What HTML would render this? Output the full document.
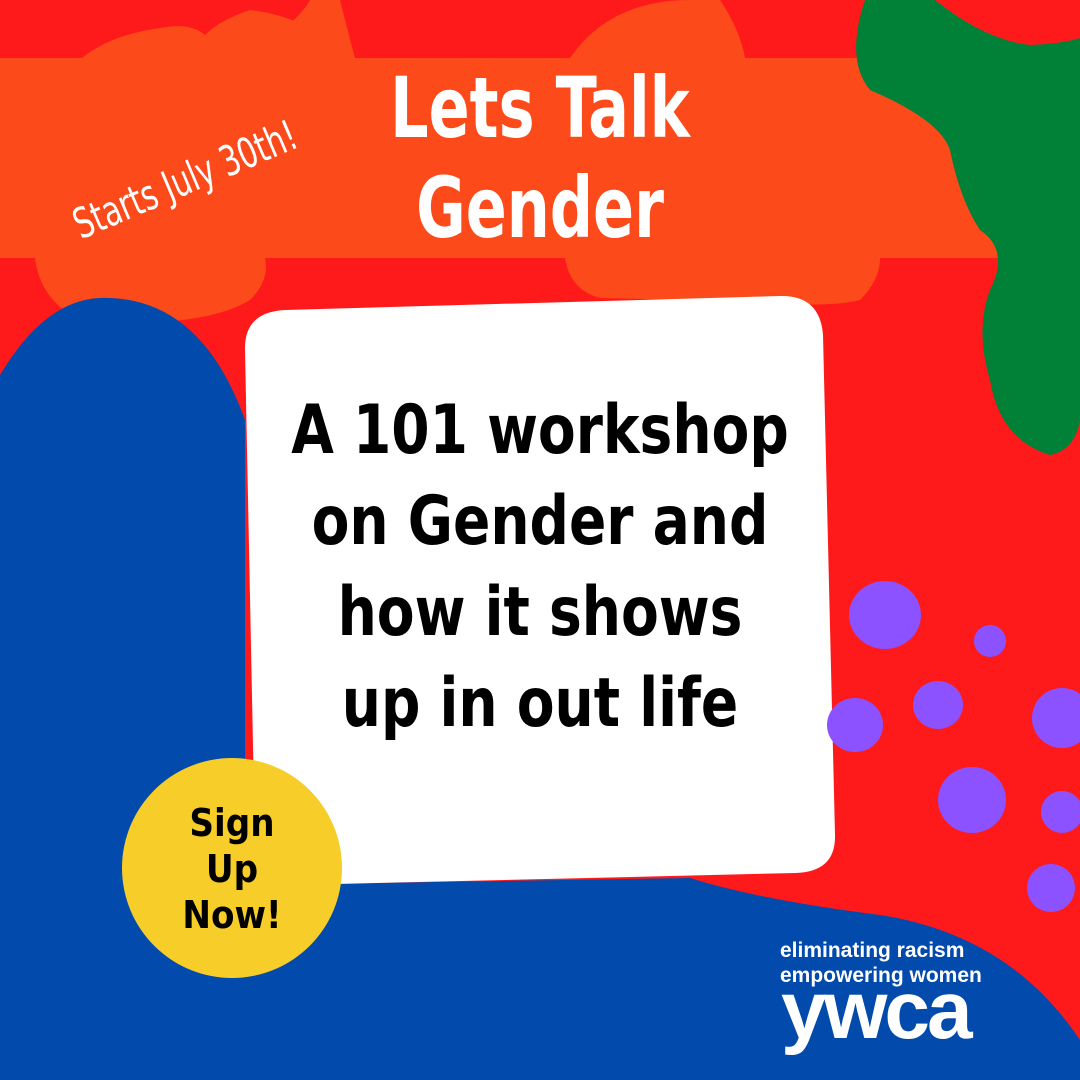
<!DOCTYPE html>
<html><head><meta charset="utf-8"><style>
body{margin:0;width:1080px;height:1080px;overflow:hidden;background:#fe1a1a;position:relative;font-family:"DejaVu Sans Condensed","Liberation Sans",sans-serif}
svg{position:absolute;left:0;top:0}
.t{position:absolute;color:#fff;text-align:center;font-family:"DejaVu Sans Condensed","Liberation Sans Narrow",sans-serif}
</style></head><body>
<svg width="1080" height="1080" viewBox="0 0 1080 1080">
<rect width="1080" height="1080" fill="#fe1a1a"/>
<path d="M0,58 H1080 V258 H0Z" fill="#fc4a1a"/>
<path d="M82,58 Q110,35 160,28 Q190,22 205,35 Q220,20 250,10 Q290,15 310,30 Q320,45 320,58Z" fill="#fc4a1a"/>
<path d="M245,58 Q300,20 310,0 L340,0 Q350,40 355,58Z" fill="#fc4a1a"/>
<path d="M35,258 Q40,300 80,320 Q200,330 250,300 Q270,280 265,258Z" fill="#fc4a1a"/>
<path d="M565,258 Q570,290 600,298 Q700,300 760,302 Q830,308 860,300 Q880,280 880,258Z" fill="#fc4a1a"/>
<path d="M570,58 Q610,0 690,0 L720,0 Q740,30 745,58Z" fill="#fc4a1a"/>
<path d="M0,375 Q45,300 100,298 Q200,295 245,420 L245,885 L690,878 Q760,900 880,915 Q1010,935 1080,1040 L1080,1080 L0,1080Z" fill="#034aad"/>
<path d="M865,0 L935,0 Q985,40 1030,45 Q1060,44 1080,38 L1080,420 Q1075,450 1050,455 Q1000,440 990,380 Q975,330 990,290 Q1010,250 980,230 Q960,200 950,150 Q940,120 870,90 Q845,60 865,0Z" fill="#018038"/>
<path d="M285,310 L780,296 Q820,295 823,335 L835,835 Q836,872 795,873 L295,885 Q256,886 255,845 L245,350 Q244,312 285,310Z" fill="#fff"/>
<circle cx="232" cy="868" r="110" fill="#f7cd29"/>
<g fill="#8c52ff">
<ellipse cx="885" cy="615" rx="36" ry="34"/><circle cx="990" cy="641" r="16"/>
<ellipse cx="938" cy="705" rx="25" ry="24"/><ellipse cx="855" cy="725" rx="28" ry="27"/>
<ellipse cx="1062" cy="718" rx="30" ry="30"/><ellipse cx="972" cy="800" rx="34" ry="33"/>
<ellipse cx="1062" cy="812" rx="21" ry="21"/><ellipse cx="1051" cy="888" rx="24" ry="24"/>
</g>
</svg>
<div class="t" style="left:330px;top:58px;width:420px;font-size:84px;font-weight:bold;line-height:100px;transform:scaleX(0.8)">Lets Talk<br>Gender</div>
<div class="t" style="left:5px;top:155px;width:360px;font-size:42px;transform:rotate(-23deg) scaleX(0.78)">Starts July 30th!</div>
<div class="t" style="left:250px;top:385px;width:580px;color:#000;font-weight:bold;font-size:68px;line-height:91px;transform:scaleX(0.9)">A 101 workshop<br>on Gender and<br>how it shows<br>up in out life</div>
<div class="t" style="left:150px;top:800px;width:164px;color:#000;font-weight:bold;font-size:38px;line-height:46px">Sign<br>Up<br>Now!</div>
<div class="t" style="left:780px;top:938px;width:300px;text-align:left;font-family:'Liberation Sans',sans-serif;font-weight:bold;font-size:21px;line-height:25px">eliminating racism<br>empowering women</div>
<div class="t" style="left:781px;top:975px;text-align:left;font-family:'Liberation Sans',sans-serif;font-weight:bold;font-size:82px;line-height:72px;letter-spacing:-3px">ywca</div>
</body></html>
